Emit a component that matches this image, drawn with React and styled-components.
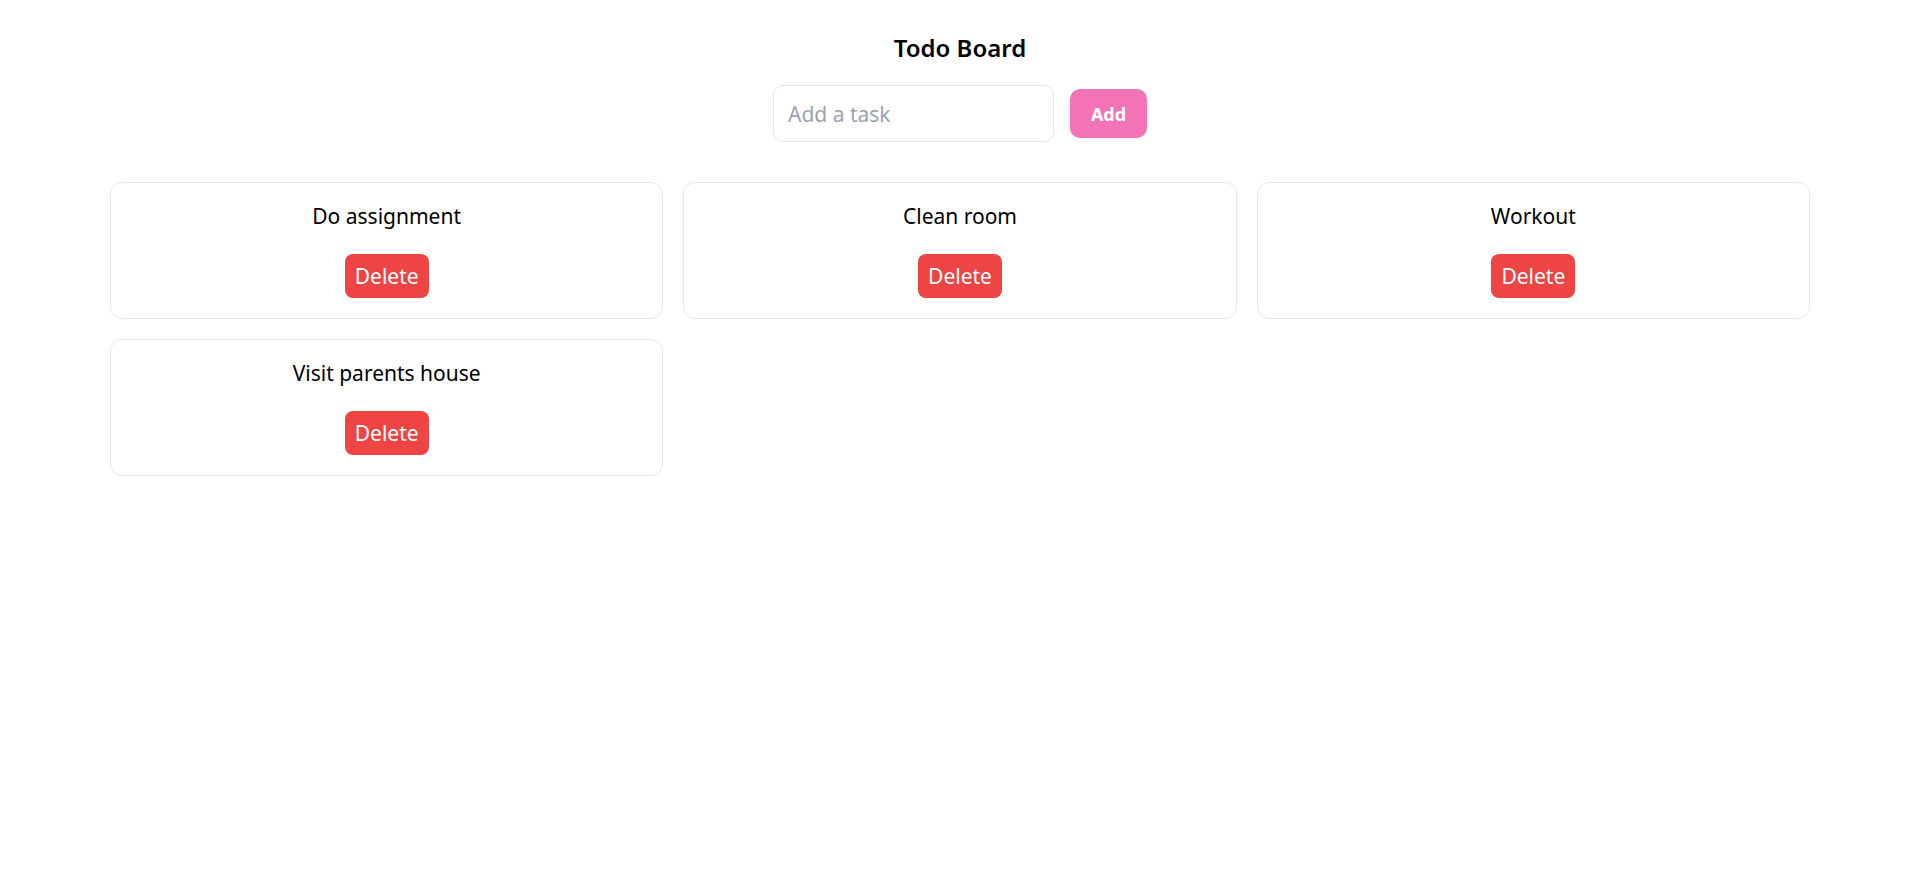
import React, { useState } from "react";
import styled, { createGlobalStyle } from "styled-components";

const GlobalStyle = createGlobalStyle`
  * { box-sizing: border-box; }
  body {
    margin: 0;
    background: #ffffff;
    color: #000000;
    font-family: "Noto Sans", "Open Sans", Arial, sans-serif;
  }
`;

const Page = styled.main`
  padding: 32px 97px 40px 110px;
  display: flex;
  flex-direction: column;
  align-items: center;
`;

const Title = styled.h1`
  margin: 0;
  font-size: 24px;
  line-height: 32px;
  font-weight: 600;
`;

const Controls = styled.form`
  margin-top: 21px;
  display: flex;
  align-items: center;
  gap: 16px;
`;

const TaskInput = styled.input`
  width: 281px;
  height: 57px;
  padding: 0 14px;
  border: 1px solid #e5e7eb;
  border-radius: 10px;
  font-family: inherit;
  font-size: 21px;
  color: #111827;
  outline: none;
  &::placeholder { color: #9ca3af; }
`;

const AddButton = styled.button`
  width: 77px;
  height: 49px;
  border: none;
  border-radius: 10px;
  background: #f472b6;
  color: #ffffff;
  font-family: inherit;
  font-size: 18px;
  font-weight: 700;
  cursor: pointer;
`;

const Grid = styled.section`
  margin-top: 40px;
  width: 100%;
  display: grid;
  grid-template-columns: repeat(3, 1fr);
  gap: 20px;
`;

const Card = styled.article`
  border: 1px solid #e5e7eb;
  border-radius: 12px;
  padding: 19px 20px 20px;
  display: flex;
  flex-direction: column;
  align-items: center;
`;

const TaskText = styled.p`
  margin: 0;
  font-size: 21px;
  line-height: 28px;
`;

const DeleteButton = styled.button`
  margin-top: 24px;
  height: 44px;
  padding: 0 10px;
  border: none;
  border-radius: 8px;
  background: #ef4444;
  color: #ffffff;
  font-family: inherit;
  font-size: 21px;
  cursor: pointer;
`;

export default function App() {
  const [tasks, setTasks] = useState([
    "Do assignment",
    "Clean room",
    "Workout",
    "Visit parents house",
  ]);
  const [value, setValue] = useState("");

  const add = (e) => {
    e.preventDefault();
    if (!value.trim()) return;
    setTasks([...tasks, value.trim()]);
    setValue("");
  };

  return (
    <>
      <GlobalStyle />
      <Page>
        <Title>Todo Board</Title>
        <Controls onSubmit={add}>
          <TaskInput
            placeholder="Add a task"
            value={value}
            onChange={(e) => setValue(e.target.value)}
          />
          <AddButton type="submit">Add</AddButton>
        </Controls>
        <Grid>
          {tasks.map((t, i) => (
            <Card key={i}>
              <TaskText>{t}</TaskText>
              <DeleteButton onClick={() => setTasks(tasks.filter((_, j) => j !== i))}>
                Delete
              </DeleteButton>
            </Card>
          ))}
        </Grid>
      </Page>
    </>
  );
}
